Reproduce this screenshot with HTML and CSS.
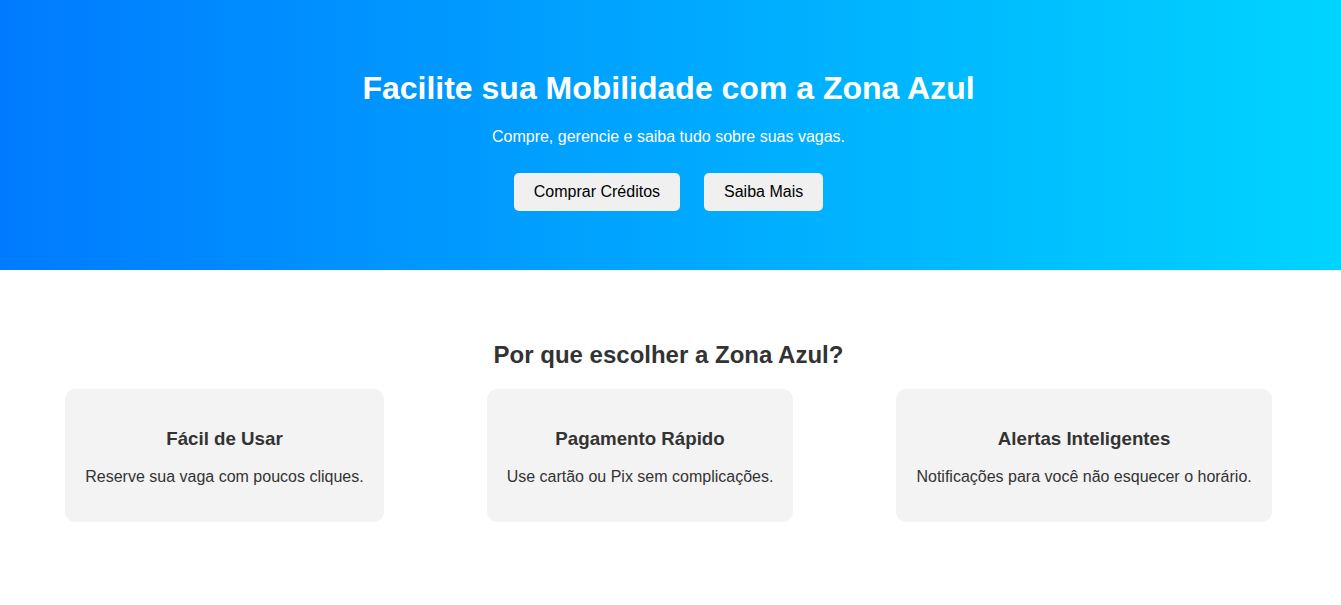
FILE: index.html
```html
<!DOCTYPE html>
<html lang="pt-BR">
<head>
<meta charset="utf-8">
<title>Zona Azul</title>
<link rel="stylesheet" href="styles.css">
</head>
<body>
<header class="hero">
  <h1 class="hero-title">Facilite sua Mobilidade com a Zona Azul</h1>
  <p class="hero-sub">Compre, gerencie e saiba tudo sobre suas vagas.</p>
  <div class="hero-actions">
    <button class="btn">Comprar Créditos</button>
    <button class="btn">Saiba Mais</button>
  </div>
</header>
<section class="features">
  <h2 class="features-title">Por que escolher a Zona Azul?</h2>
  <div class="feature-list">
    <div class="card">
      <h3 class="card-title">Fácil de Usar</h3>
      <p class="card-text">Reserve sua vaga com poucos cliques.</p>
    </div>
    <div class="card">
      <h3 class="card-title">Pagamento Rápido</h3>
      <p class="card-text">Use cartão ou Pix sem complicações.</p>
    </div>
    <div class="card">
      <h3 class="card-title">Alertas Inteligentes</h3>
      <p class="card-text">Notificações para você não esquecer o horário.</p>
    </div>
  </div>
</section>
</body>
</html>
```
FILE: styles.css
```css
* { box-sizing: border-box; }
html, body { margin: 0; padding: 0; }
body {
  font-family: "Liberation Sans", Arial, sans-serif;
  color: #333;
  background: #fff;
}
.hero {
  background: linear-gradient(90deg, #007bff, #00d4ff);
  color: #fff;
  text-align: center;
  padding: 70px 24px 49px 20px;
}
.hero-title {
  font-size: 32px;
  margin: 0 0 21px;
}
.hero-sub {
  font-size: 16px;
  margin: 0 0 17px;
}
.hero-actions {
  display: flex;
  justify-content: center;
  gap: 24px;
  padding: 10px 0;
}
.btn {
  font-family: "Liberation Sans", Arial, sans-serif;
  font-size: 16px;
  color: #000;
  background: #f0f0f0;
  border: none;
  border-radius: 5px;
  padding: 10px 20px;
  line-height: 18px;
  cursor: pointer;
}
.features {
  padding: 51px 24px 50px 20px;
  text-align: center;
}
.features-title {
  font-size: 24px;
  margin: 20px 0;
}
.feature-list {
  display: flex;
  justify-content: center;
  gap: 103px;
}
.card {
  background: #f3f3f3;
  border-radius: 10px;
  padding: 20px;
}
.card-title {
  font-size: 18.72px;
  margin: 18.72px 0;
}
.card-text {
  font-size: 16px;
  margin: 16px 0;
}
```
